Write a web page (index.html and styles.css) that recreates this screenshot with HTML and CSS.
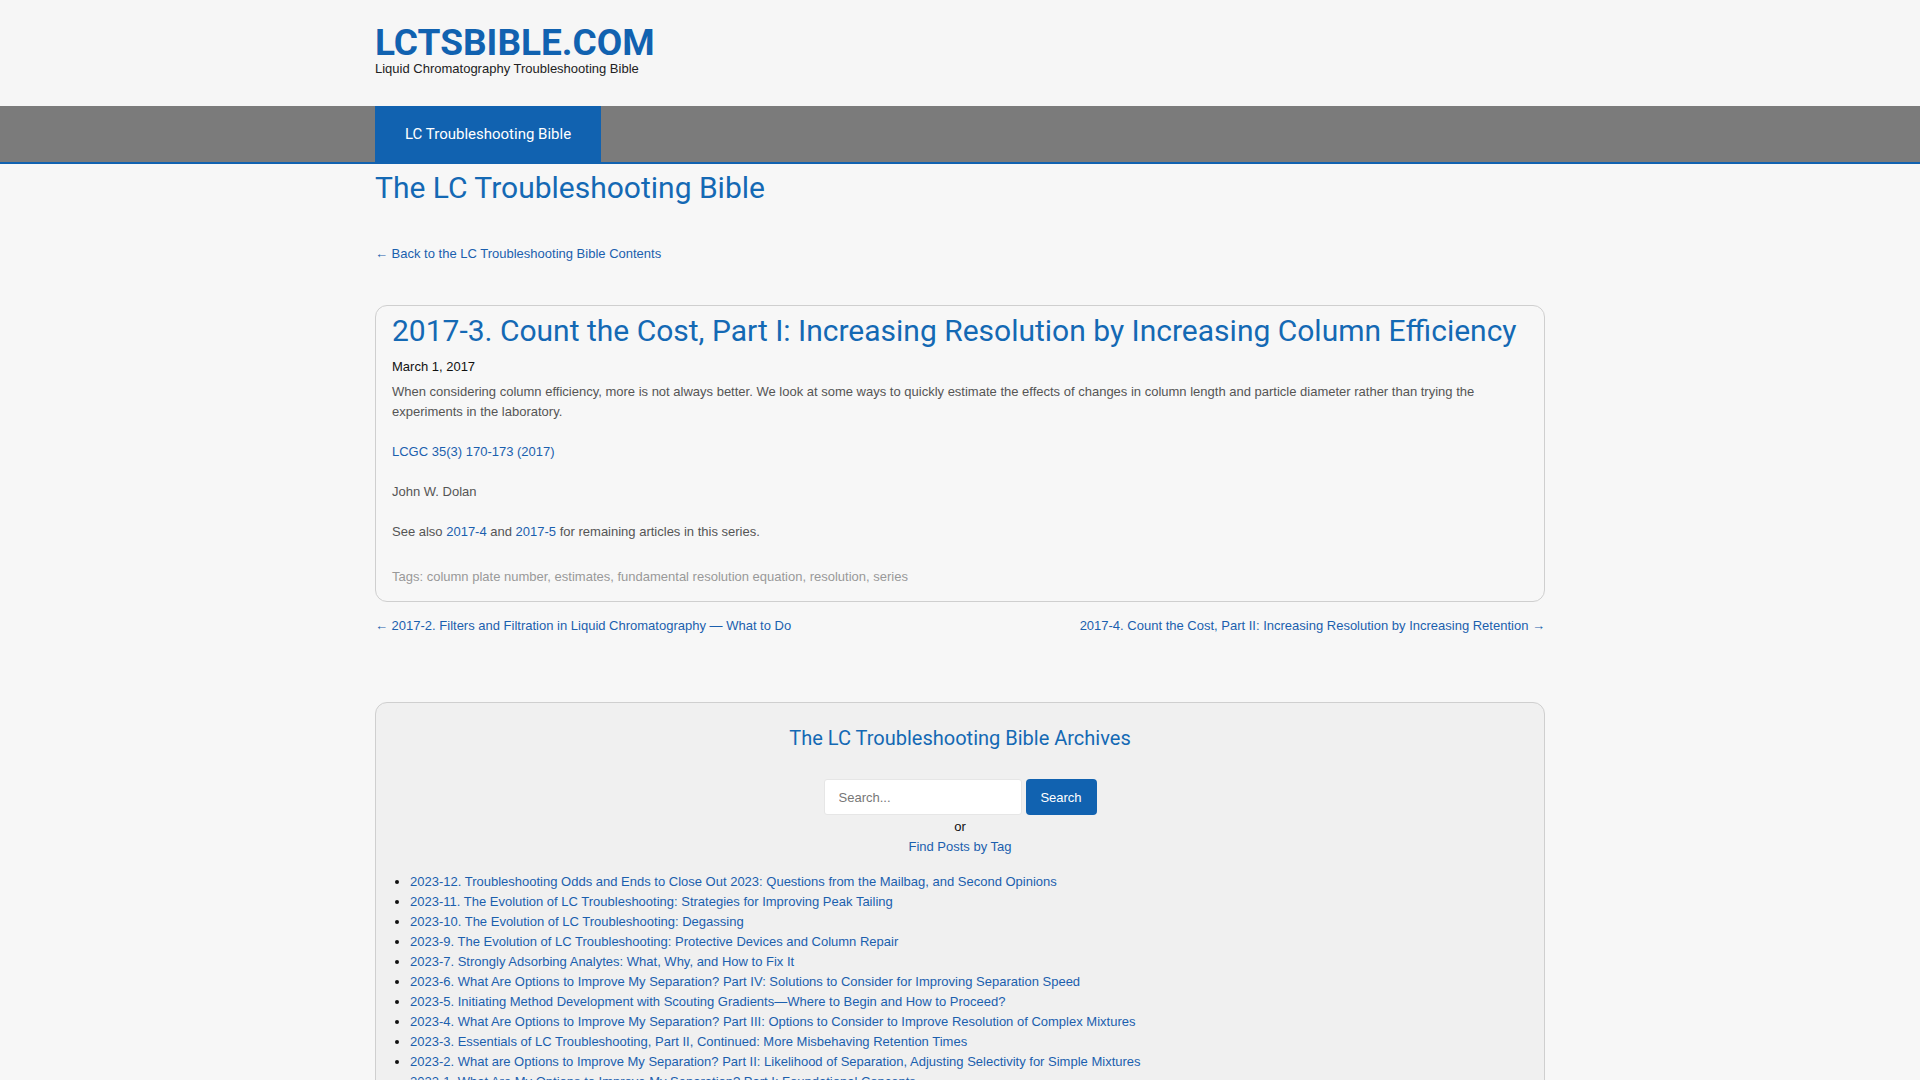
FILE: index.html
```html
<!DOCTYPE html>
<html lang="en">
<head>
<meta charset="utf-8">
<title>The LC Troubleshooting Bible</title>
<link rel="stylesheet" href="styles.css">
</head>
<body>
<header class="site-header">
  <div class="container">
    <div class="site-title">LCTSBIBLE.COM</div>
    <div class="site-tagline">Liquid Chromatography Troubleshooting Bible</div>
  </div>
</header>
<nav class="main-nav">
  <div class="container nav-inner">
    <a class="nav-item active" href="#">LC Troubleshooting Bible</a>
  </div>
</nav>
<main class="container">
  <h1 class="page-title">The LC Troubleshooting Bible</h1>
  <p class="back-link"><a href="#">← Back to the LC Troubleshooting Bible Contents</a></p>

  <article class="post">
    <h2 class="post-title">2017-3. Count the Cost, Part I: Increasing Resolution by Increasing Column Efficiency</h2>
    <div class="post-date">March 1, 2017</div>
    <div class="post-body">
      <p>When considering column efficiency, more is not always better. We look at some ways to quickly estimate the effects of changes in column length and particle diameter rather than trying the experiments in the laboratory.</p>
      <p><a href="#">LCGC 35(3) 170-173 (2017)</a></p>
      <p>John W. Dolan</p>
      <p>See also <a href="#">2017-4</a> and <a href="#">2017-5</a> for remaining articles in this series.</p>
    </div>
    <div class="post-tags">Tags: column plate number, estimates, fundamental resolution equation, resolution, series</div>
  </article>

  <div class="post-nav">
    <a href="#">← 2017-2. Filters and Filtration in Liquid Chromatography — What to Do</a>
    <a href="#">2017-4. Count the Cost, Part II: Increasing Resolution by Increasing Retention →</a>
  </div>

  <section class="archives">
    <h3 class="archives-title">The LC Troubleshooting Bible Archives</h3>
    <form class="search-form">
      <input class="search-input" type="text" placeholder="Search...">
      <button class="search-btn" type="button">Search</button>
    </form>
    <div class="or">or</div>
    <div class="tag-link"><a href="#">Find Posts by Tag</a></div>
    <ul class="archive-list">
      <li><a href="#">2023-12. Troubleshooting Odds and Ends to Close Out 2023: Questions from the Mailbag, and Second Opinions</a></li>
      <li><a href="#">2023-11. The Evolution of LC Troubleshooting: Strategies for Improving Peak Tailing</a></li>
      <li><a href="#">2023-10. The Evolution of LC Troubleshooting: Degassing</a></li>
      <li><a href="#">2023-9. The Evolution of LC Troubleshooting: Protective Devices and Column Repair</a></li>
      <li><a href="#">2023-7. Strongly Adsorbing Analytes: What, Why, and How to Fix It</a></li>
      <li><a href="#">2023-6. What Are Options to Improve My Separation? Part IV: Solutions to Consider for Improving Separation Speed</a></li>
      <li><a href="#">2023-5. Initiating Method Development with Scouting Gradients—Where to Begin and How to Proceed?</a></li>
      <li><a href="#">2023-4. What Are Options to Improve My Separation? Part III: Options to Consider to Improve Resolution of Complex Mixtures</a></li>
      <li><a href="#">2023-3. Essentials of LC Troubleshooting, Part II, Continued: More Misbehaving Retention Times</a></li>
      <li><a href="#">2023-2. What are Options to Improve My Separation? Part II: Likelihood of Separation, Adjusting Selectivity for Simple Mixtures</a></li>
      <li><a href="#">2023-1. What Are My Options to Improve My Separation? Part I: Foundational Concepts</a></li>
      <li><a href="#">2022-12. Essentials of LC Troubleshooting, Part II: Misbehaving Retention Times</a></li>
      <li><a href="#">2022-11. Essentials of LC Troubleshooting, Part I: Pressure Problems</a></li>
    </ul>
  </section>
</main>
</body>
</html>
```
FILE: styles.css
```css
* { box-sizing: border-box; }
html, body { margin: 0; padding: 0; }
body {
  background: #f7f7f7;
  font-family: "Liberation Sans", Arial, sans-serif;
  font-size: 13px;
  line-height: 20px;
  color: #555;
}
a { color: #1b5fae; text-decoration: none; }
.container { width: 1170px; margin: 0 auto; }

.site-header { background: #f6f6f6; height: 106px; padding-top: 24px; }
.site-title {
  font-family: Roboto, sans-serif;
  font-weight: 700;
  font-size: 37px;
  line-height: 38px;
  color: #1162b0;
}
.site-tagline {
  font-size: 13px;
  line-height: 13px;
  color: #222;
}

.main-nav { background: #7b7b7b; border-bottom: 2px solid #1162b0; }
.nav-inner { display: flex; height: 56px; }
.nav-item {
  display: flex;
  align-items: center;
  padding: 0 30px;
  background: #1162b0;
  color: #fff;
  font-family: Roboto, sans-serif;
  font-size: 15px;
}

.page-title {
  margin: 6px 0 0;
  font-family: Roboto, sans-serif;
  font-weight: 400;
  font-size: 30px;
  line-height: 36px;
  color: #1469b4;
}
.back-link { margin: 38px 0 0; }

.post {
  margin-top: 41px;
  border: 1px solid #cfcfcf;
  border-radius: 12px;
  padding: 7px 16px 14px;
}
.post-title {
  margin: 0;
  font-family: Roboto, sans-serif;
  font-weight: 400;
  font-size: 30px;
  line-height: 36px;
  color: #1469b4;
}
.post-date { margin-top: 8px; color: #111; }
.post-body { margin-top: 5px; }
.post-body p { margin: 0 0 20px; }
.post-body p:last-child { margin-bottom: 0; }
.post-tags { margin-top: 25px; color: #999; }

.post-nav {
  display: flex;
  justify-content: space-between;
  margin-top: 14px;
}

.archives {
  margin-top: 66px;
  background: #f0f0f0;
  border: 1px solid #cfcfcf;
  border-radius: 12px;
  padding: 23px 16px 20px;
  text-align: center;
}
.archives-title {
  margin: 0;
  font-family: Roboto, sans-serif;
  font-weight: 400;
  font-size: 20px;
  line-height: 24px;
  color: #1469b4;
}
.search-form {
  display: flex;
  justify-content: center;
  gap: 4px;
  margin-top: 29px;
}
.search-input {
  width: 198px;
  height: 36px;
  border: 1px solid #e6e6e6;
  border-radius: 3px;
  background: #fff;
  padding: 0 14px;
  font-family: "Liberation Sans", Arial, sans-serif;
  font-size: 13px;
  color: #555;
  outline: none;
}
.search-input::placeholder { color: #777; }
.search-btn {
  width: 71px;
  height: 36px;
  border: none;
  border-radius: 4px;
  background: #1162b0;
  color: #fff;
  font-family: "Liberation Sans", Arial, sans-serif;
  font-size: 13px;
  padding: 0;
}
.or { margin-top: 2px; color: #111; }
.archive-list {
  margin: 15px 0 0;
  padding-left: 18px;
  text-align: left;
  color: #111;
}
.archive-list li { line-height: 20px; }
```
